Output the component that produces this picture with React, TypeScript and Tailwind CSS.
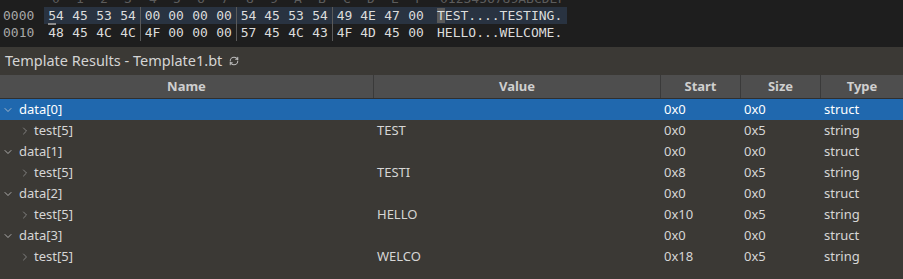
import { RefreshCw, ChevronDown, ChevronRight } from "lucide-react";

const hexRows = [
  { offset: "0000", bytes: ["54", "45", "53", "54", "00", "00", "00", "00", "54", "45", "53", "54", "49", "4E", "47", "00"], ascii: "TEST....TESTING.", selected: true },
  { offset: "0010", bytes: ["48", "45", "4C", "4C", "4F", "00", "00", "00", "57", "45", "4C", "43", "4F", "4D", "45", "00"], ascii: "HELLO...WELCOME.", selected: false },
];

const labels = "0123456789ABCDEF".split("");

type Row = { name: string; value: string; start: string; size: string; type: string; child: boolean };

const rows: Row[] = [
  { name: "data[0]", value: "", start: "0x0", size: "0x0", type: "struct", child: false },
  { name: "test[5]", value: "TEST", start: "0x0", size: "0x5", type: "string", child: true },
  { name: "data[1]", value: "", start: "0x0", size: "0x0", type: "struct", child: false },
  { name: "test[5]", value: "TESTI", start: "0x8", size: "0x5", type: "string", child: true },
  { name: "data[2]", value: "", start: "0x0", size: "0x0", type: "struct", child: false },
  { name: "test[5]", value: "HELLO", start: "0x10", size: "0x5", type: "string", child: true },
  { name: "data[3]", value: "", start: "0x0", size: "0x0", type: "struct", child: false },
  { name: "test[5]", value: "WELCO", start: "0x18", size: "0x5", type: "string", child: true },
];

function HexView() {
  return (
    <div className="h-[47px] bg-[#1e1e1e] overflow-hidden font-['DejaVu_Sans_Mono','Liberation_Mono',monospace] text-[13px] leading-[17px]">
      <div className="flex -mt-[10px] text-[#5c5c5c]">
        <div className="w-[44px]" />
        <div className="flex">
          {labels.map((l, i) => (
            <div key={l} className={"w-[24px] text-center " + (i === 4 || i === 8 || i === 12 ? "ml-[1px]" : "")}>
              {l}
            </div>
          ))}
        </div>
        <div className="ml-[9px]">0123456789ABCDEF</div>
      </div>
      {hexRows.map((r) => (
        <div key={r.offset} className="flex">
          <div className="w-[44px] pl-[3px] text-[#a8a8a8]">{r.offset}</div>
          <div className={"flex pr-[5px] " + (r.selected ? "bg-[#293341]" : "")}>
            <div className="flex">
              {r.bytes.map((b, i) => (
                <div
                  key={i}
                  className={
                    "w-[24px] text-center text-[#dcdcdc] " +
                    (i === 4 || i === 8 || i === 12 ? "border-l border-[#5a5a5a] " : "")
                  }
                >
                  {i === 0 && r.selected ? (
                    <span className="border-b-2 border-[#8a8a8a]">{b.slice(0, 1)}</span>
                  ) : (
                    b.slice(0, 1)
                  )}
                  {b.slice(1)}
                </div>
              ))}
            </div>
            <div className="ml-[9px] text-[#dcdcdc]">
              {r.selected ? (
                <>
                  <span className="bg-[#5a5a5a]">{r.ascii.slice(0, 1)}</span>
                  {r.ascii.slice(1)}
                </>
              ) : (
                r.ascii
              )}
            </div>
          </div>
        </div>
      ))}
    </div>
  );
}

export default function App() {
  return (
    <div className="w-[903px] h-[279px] bg-[#3b3935] overflow-hidden font-['Noto_Sans','Open_Sans',sans-serif]">
      <HexView />
      <div className="h-[28px] flex items-center pl-[5px] gap-[7px] text-[14.5px] text-[#d4d4d4]">
        <span>Template Results - Template1.bt</span>
        <RefreshCw size={10} strokeWidth={2.5} className="text-[#bdbdbd]" />
      </div>
      <div className="grid grid-cols-[374px_287px_80px_80px_82px] h-[24px] bg-[#4e4e4e] border-b border-[#2f2f2f] text-[13px] font-bold text-[#cfcfcf]">
        <div className="flex items-center justify-center border-r border-[#3a3a3a]">Name</div>
        <div className="flex items-center justify-center border-r border-[#3a3a3a]">Value</div>
        <div className="flex items-center justify-center border-r border-[#3a3a3a]">Start</div>
        <div className="flex items-center justify-center border-r border-[#3a3a3a]">Size</div>
        <div className="flex items-center justify-center">Type</div>
      </div>
      {rows.map((r, i) => (
        <div
          key={i}
          className={
            "grid grid-cols-[374px_287px_80px_80px_82px] h-[21px] items-center text-[13px] text-[#d6d6d6] " +
            (i === 0 ? "bg-[#2068ae] text-white" : "")
          }
        >
          <div className="flex items-center">
            {r.child ? (
              <>
                <ChevronRight size={12} strokeWidth={1.5} className="ml-[19px] text-[#9a9a9a]" />
                <span className="ml-[3px]">{r.name}</span>
              </>
            ) : (
              <>
                <ChevronDown size={12} strokeWidth={1.5} className="ml-[2px] text-[#d0d0d0]" />
                <span className="ml-[5px]">{r.name}</span>
              </>
            )}
          </div>
          <div className="pl-[3px]">{r.value}</div>
          <div className="pl-[3px]">{r.start}</div>
          <div className="pl-[3px]">{r.size}</div>
          <div className="pl-[3px]">{r.type}</div>
        </div>
      ))}
    </div>
  );
}
